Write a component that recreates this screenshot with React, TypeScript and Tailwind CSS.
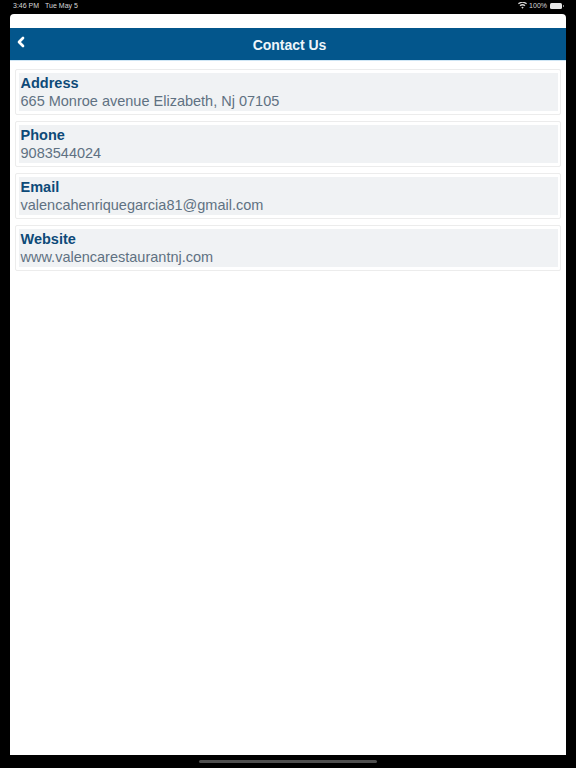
import { ChevronLeft } from "lucide-react";

const CONTACT_ROWS = [
  { label: "Address", value: "665 Monroe avenue Elizabeth, Nj 07105" },
  { label: "Phone", value: "9083544024" },
  { label: "Email", value: "valencahenriquegarcia81@gmail.com" },
  { label: "Website", value: "www.valencarestaurantnj.com" },
];

function StatusBar() {
  return (
    <div className="flex h-[14px] items-start justify-between pl-[13px] pr-[12px] pt-[2px] text-[7px] leading-[7px] text-[#d8d8d8]">
      <div className="flex gap-[6px]">
        <span>3:46 PM</span>
        <span>Tue May 5</span>
      </div>
      <div className="flex items-center gap-[2px]">
        <svg width="9" height="7" viewBox="0 0 18 14" fill="#d8d8d8">
          <path d="M9 13.5 6.6 10.6a3.6 3.6 0 0 1 4.8 0L9 13.5ZM4.9 8.6 3.2 6.6a8.8 8.8 0 0 1 11.6 0l-1.7 2a6.2 6.2 0 0 0-8.2 0ZM1.6 4.6 0 2.7a13.8 13.8 0 0 1 18 0l-1.6 1.9a11.3 11.3 0 0 0-14.8 0Z" />
        </svg>
        <span>100%</span>
        <div className="ml-[1px] flex items-center">
          <div className="h-[6px] w-[12px] rounded-[1.5px] bg-[#e6e6e6]" />
          <div className="ml-[1px] h-[2px] w-[1px] bg-[#8a8a8a]" />
        </div>
      </div>
    </div>
  );
}

export default function App() {
  return (
    <div className="flex h-[768px] w-[576px] flex-col overflow-hidden bg-black font-['Liberation_Sans',Arial,sans-serif]">
      <StatusBar />
      <div className="mx-[10px] flex h-[741px] flex-col rounded-t-[4px] bg-white">
        <div className="h-[14px]" />
        {/* Header */}
        <div className="relative box-content flex h-[32px] items-center justify-center border-b border-[#cfe6f5] bg-[#03568c]">
          <ChevronLeft className="absolute left-[3px] top-[6px] h-[16px] w-[16px] text-white" strokeWidth={4} />
          <span className="pl-[3px] pt-[2px] text-[14px] font-bold leading-none tracking-[-0.05px] text-[#eef5fa]">Contact Us</span>
        </div>
        {/* Contact rows */}
        <div className="flex flex-col gap-[6px] px-[5px] pt-[8px]">
          {CONTACT_ROWS.map((row) => (
            <div key={row.label} className="h-[46px] rounded-[2px] border border-[#ececec] bg-white pb-[3px] pl-[3px] pr-[2px] pt-[3px]">
              <div className="flex h-[38px] flex-col bg-[#f0f2f4] pl-[1.5px] pt-[1px]">
                <span className="text-[14.5px] font-bold leading-[18px] text-[#0d4a78]">{row.label}</span>
                <span className="text-[14.5px] leading-[18px] text-[#5f7182]">{row.value}</span>
              </div>
            </div>
          ))}
        </div>
      </div>
      {/* Home indicator */}
      <div className="flex flex-1 items-start justify-center pt-[5px]">
        <div className="h-[3px] w-[178px] rounded-full bg-[#4f4f4f]" />
      </div>
    </div>
  );
}
